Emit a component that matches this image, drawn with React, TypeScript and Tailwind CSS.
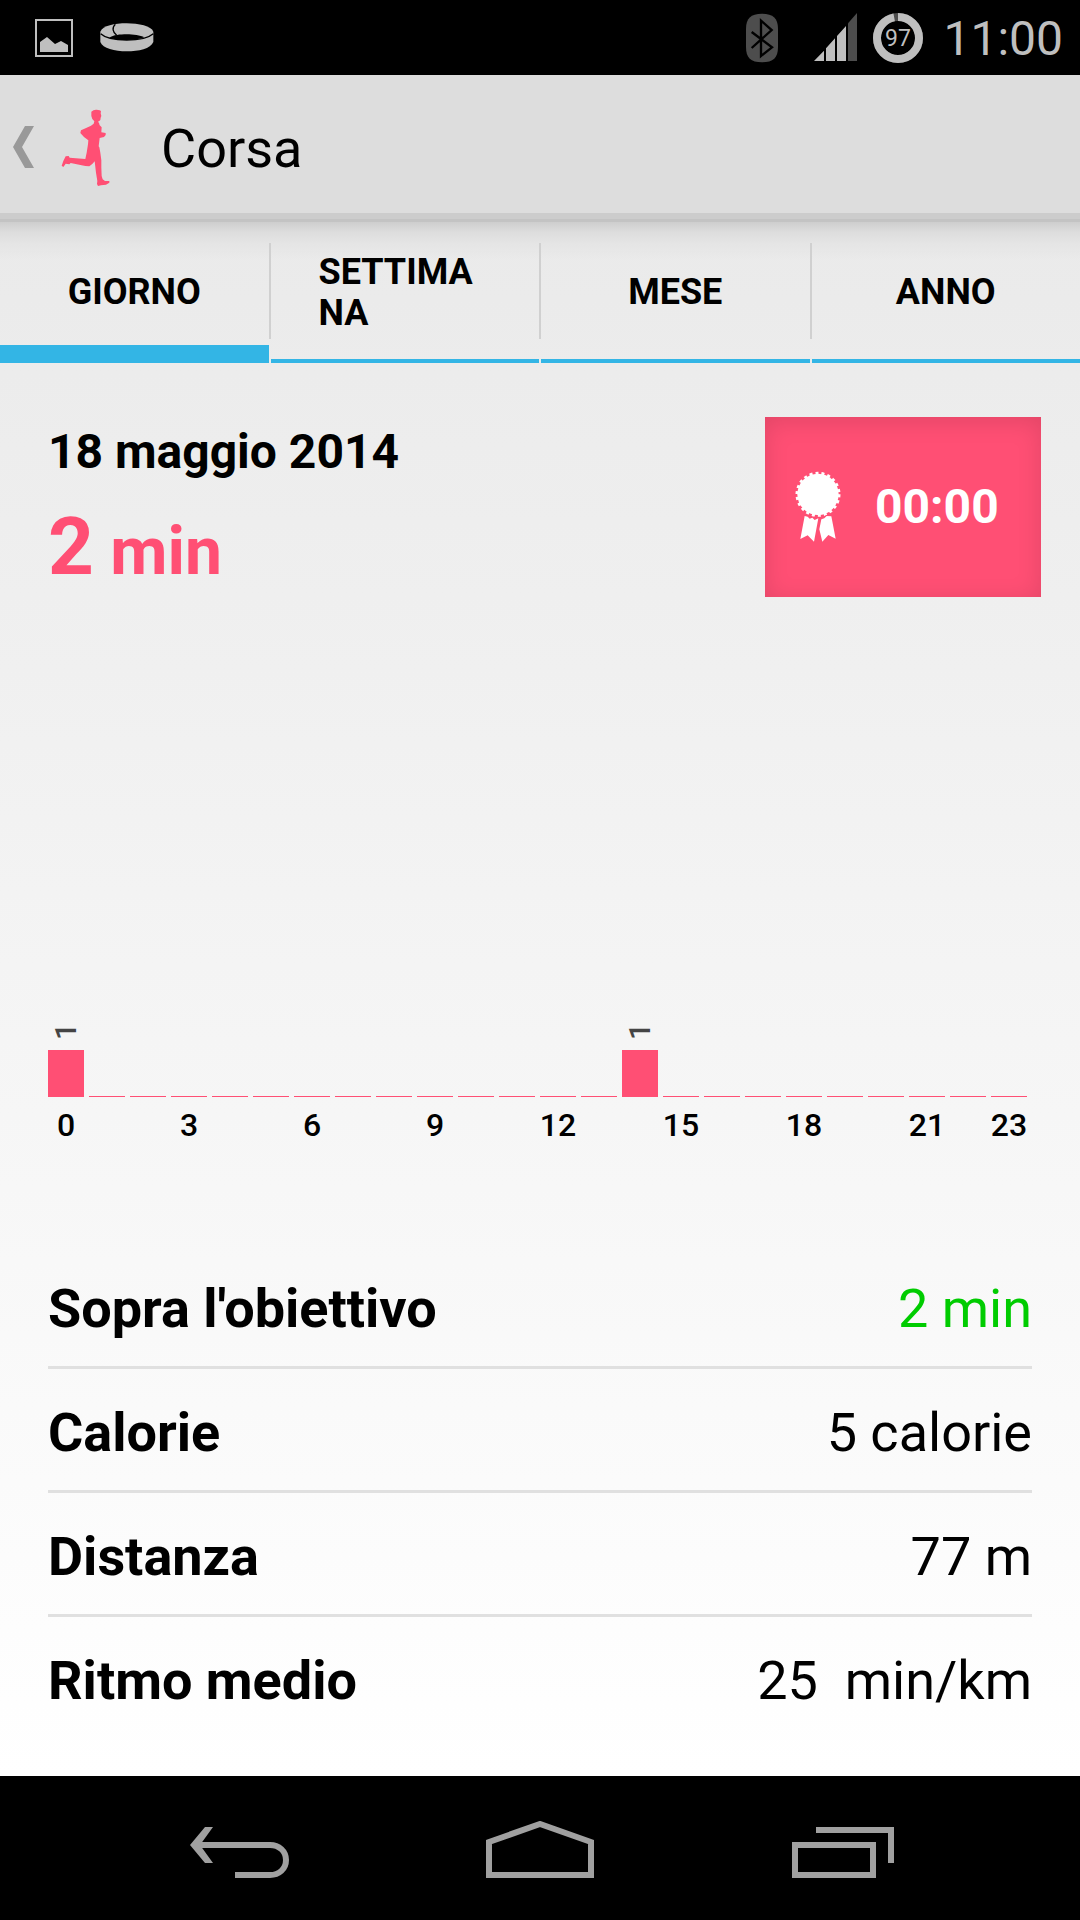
import { useState } from "react";
import clsx from "clsx";

const TABS = ["GIORNO", "SETTIMANA", "MESE", "ANNO"];

// minutes of running for each hour of the day
const HOURS = Array.from({ length: 24 }, (_, hour) => (hour === 0 || hour === 14 ? 1 : 0));
const HOUR_LABELS = [0, 3, 6, 9, 12, 15, 18, 21, 23];
const MINUTE_HEIGHT = 47;

const STATS = [
  { label: "Sopra l'obiettivo", value: "2 min", positive: true },
  { label: "Calorie", value: "5 calorie" },
  { label: "Distanza", value: "77 m" },
  { label: "Ritmo medio", value: "25\u00a0 min/km" },
];

function IconPicture() {
  return (
    <svg width="38" height="38" viewBox="0 0 38 38" fill="none">
      <rect x="1" y="1" width="36" height="36" stroke="#bfbfbf" strokeWidth="2" />
      <path d="M5 33V23l7-5 8 7 6-3 7 4v7Z" fill="#bfbfbf" />
    </svg>
  );
}

function IconBand() {
  return (
    <svg width="54" height="29" viewBox="0 0 162 87">
      <path d="M1 26C8 8 44 1 80 1s74 8 80 25v31c-8 20-44 28-80 28S8 76 1 57Z" fill="#bfbfbf" />
      <path d="M2 32c14 13 40 19 78 19s65-6 80-19" fill="none" stroke="#000" strokeWidth="4" />
      <path d="M28 44c12-8 32-10 52-10s41 3 53 9c-13 6-33 8-53 8s-39-2-52-7Z" fill="#000" />
      <path d="M46 4c-11 10-8 24 4 33" fill="none" stroke="#000" strokeWidth="4" />
    </svg>
  );
}

function IconBluetooth() {
  return (
    <svg width="32" height="50" viewBox="0 0 96 150">
      <path d="M48 2c34 0 48 14 48 46v54c0 32-14 46-48 46S0 134 0 102V48C0 16 14 2 48 2Z" fill="#4d4d4d" />
      <path d="M17 57l61 46-33 26V23l32 28-60 54" fill="none" stroke="#000" strokeWidth="7" />
    </svg>
  );
}

function IconSignal() {
  return (
    <svg width="43" height="49" viewBox="0 0 129 147">
      <path d="M0 144l30-31v31ZM36 144v-38l27-30v68ZM69 144V69l27-30v105Z" fill="#bfbfbf" />
      <path d="M102 144V31l27-31v144Z" fill="#4d4d4d" />
    </svg>
  );
}

function IconBattery({ level }: { level: number }) {
  return (
    <svg width="50" height="50" viewBox="0 0 50 50">
      <circle cx="25" cy="25" r="21" fill="none" stroke="#4d4d4d" strokeWidth="8" />
      <circle
        cx="25"
        cy="25"
        r="21"
        fill="none"
        stroke="#bfbfbf"
        strokeWidth="8"
        pathLength="100"
        strokeDasharray={`${level} 100`}
        transform="rotate(-90 25 25)"
      />
      <text x="25" y="33" textAnchor="middle" fontSize="23" fill="#bfbfbf">
        {level}
      </text>
    </svg>
  );
}

function IconChevron() {
  return (
    <svg width="21" height="42" viewBox="0 0 21 42" fill="#999">
      <path d="M12 0h9L9 21l12 21h-9L0 21Z" />
    </svg>
  );
}

function IconRunner() {
  return (
    <svg width="50" height="79" viewBox="180 321 150 237" fill="#ff4f74">
      <path d="M274 332Q281 325 290 326Q302 326 303 331L302 337L304 345L302 350L301 357Q298 361 294 362L297 366L299 373L305 379L304 394L317 396L317 402L312 408L299 411L296 436L298 439L301 455L304 478L304 500L305 525L308 535L315 540L328 540L328 545L318 551L303 553L294 555L291 549L292 540L288 515L284 481Q276 492 268 496L256 495L212 486L208 490L197 488L190 498L185 494L190 480L197 466L206 465L209 470L256 474L260 455L264 430L265 418L252 408L241 396L243 388L260 380L273 374L281 368L283 361Q275 354 274 345Z" />
    </svg>
  );
}

function IconRosette() {
  return (
    <svg width="46" height="72" viewBox="164 216 138 216" fill="#fff">
      <circle cx="233" cy="286" r="62" />
      <circle cx="233" cy="286" r="63" fill="none" stroke="#fff" strokeWidth="9" pathLength="44" strokeDasharray="1 1" />
      <path d="M193 351l9 2 6 6 8-3 7 7 11-5-13 70-19-19-22 11Z" />
      <path d="M243 361l9-3 7-7 14 1 13 67-22-11-18 20-9-37Z" />
    </svg>
  );
}

function StatusBar() {
  return (
    <div className="flex h-[75px] items-center justify-between bg-black pr-[17px] pl-[35px]">
      <div className="flex items-center gap-[27px]">
        <IconPicture />
        <IconBand />
      </div>
      <div className="flex items-center text-[#bfbfbf]">
        <IconBluetooth />
        <span className="ml-9">
          <IconSignal />
        </span>
        <span className="ml-4">
          <IconBattery level={97} />
        </span>
        <span className="ml-5 pt-[2px] text-[48px] leading-none">11:00</span>
      </div>
    </div>
  );
}

function Header() {
  return (
    <header className="flex h-[147px] items-center bg-[#ddd] pl-[13px] shadow-[inset_0_-3px_#c3c3c3,inset_0_-9px_#ccc]">
      <button type="button" aria-label="Indietro" className="flex items-center gap-[26px] pb-[3px]">
        <IconChevron />
        <IconRunner />
      </button>
      <h1 className="ml-[51px] text-[54px] leading-none">Corsa</h1>
    </header>
  );
}

function Tabs() {
  const [active, setActive] = useState(TABS[0]);

  return (
    <nav className="flex h-[141px] gap-[2px] bg-[linear-gradient(#cecece,#dddddd_10px,#e5e5e5_22px,#ebebeb00_38px)]">
      {TABS.map((tab, index) => (
        <button
          key={tab}
          type="button"
          onClick={() => setActive(tab)}
          className="relative flex flex-1 items-center justify-center px-12 text-left text-[36px] leading-[41px] font-bold"
        >
          <span className="break-all">{tab}</span>
          {index > 0 && <span className="absolute top-[21px] -left-[2px] h-24 w-[2px] bg-[#d0d0d0]" />}
          <span
            className={clsx(
              "absolute inset-x-0 bottom-0 bg-[#33b5e5]",
              active === tab ? "h-[18px]" : "h-1"
            )}
          />
        </button>
      ))}
    </nav>
  );
}

function Summary() {
  return (
    <section className="flex items-start justify-between pt-[54px] pr-[39px] pl-12 font-bold">
      <div>
        <h2 className="pt-[7px] text-[48px] leading-[56px]">18 maggio 2014</h2>
        <p className="mt-[19px] text-[66px] leading-[96px] text-[#ff4f74]">
          <span className="text-[80px]">2</span> min
        </p>
      </div>
      <div className="flex h-[180px] w-[276px] items-center bg-[#ff4f74] pl-[30px] text-white shadow-[inset_0_4px_24px_rgba(0,0,0,0.12)]">
        <IconRosette />
        <span className="ml-[34px] text-[48px] leading-none">00:00</span>
      </div>
    </section>
  );
}

function Chart() {
  return (
    <section className="mr-[5px] flex flex-1 flex-col justify-end">
      <div className="flex items-end gap-[5px]">
        {HOURS.map((minutes, hour) => (
          <div key={hour} className="flex w-0 flex-1 flex-col items-center">
            {minutes > 0 && (
              <span className="mb-[10px] rotate-180 text-[30px] leading-9 font-medium text-[#444] [writing-mode:vertical-rl]">
                {minutes}
              </span>
            )}
            <div
              className="w-full bg-[#ff4f74]"
              style={{ height: Math.max(1, minutes * MINUTE_HEIGHT) }}
            />
          </div>
        ))}
      </div>
      <div className="mt-2 flex h-10 gap-[5px] text-[32px] leading-10 font-medium">
        {HOURS.map((_, hour) => (
          <div key={hour} className="flex w-0 flex-1 justify-center">
            {HOUR_LABELS.includes(hour) && <span>{hour}</span>}
          </div>
        ))}
      </div>
    </section>
  );
}

function Stats() {
  return (
    <dl className="mt-[100px] pb-[38px] text-[54px] leading-[64px]">
      {STATS.map(({ label, value, positive }) => (
        <div
          key={label}
          className="flex justify-between border-b-[3px] border-[#e0e0e0] pt-8 pb-[25px] last:border-b-0"
        >
          <dt className="font-bold">{label}</dt>
          <dd className={clsx(positive && "text-[#00cc00]")}>{value}</dd>
        </div>
      ))}
    </dl>
  );
}

function NavigationBar() {
  return (
    <footer className="flex h-36 items-center bg-black px-[87px] pt-1.5">
      <button type="button" aria-label="Indietro" className="flex flex-1 justify-center">
        <svg width="108" height="60" viewBox="0 0 108 60">
          <path d="M6 24L21 6h8L16 24l13 18h-8Z" fill="#a0a0a0" />
          <path d="M12 24h74c9 0 16 6 16 15s-7 15-16 15H51" fill="none" stroke="#a0a0a0" strokeWidth="6" />
        </svg>
      </button>
      <button type="button" aria-label="Home" className="flex flex-1 justify-center">
        <svg width="108" height="60" viewBox="0 0 108 60" fill="none" stroke="#a0a0a0" strokeWidth="6">
          <path d="M3 21L54 3l51 18v33H3Z" />
        </svg>
      </button>
      <button type="button" aria-label="App recenti" className="flex flex-1 justify-center">
        <svg width="108" height="60" viewBox="0 0 108 60" fill="none" stroke="#a0a0a0" strokeWidth="6">
          <path d="M7 24h78v30H7ZM28 9h75v33" />
        </svg>
      </button>
    </footer>
  );
}

function App() {
  return (
    <div className="flex min-h-screen flex-col bg-white font-[Roboto,sans-serif] text-black">
      <StatusBar />
      <Header />
      <main className="flex flex-1 flex-col bg-linear-to-b from-[#eaeaea] to-white">
        <Tabs />
        <Summary />
        <div className="flex flex-1 flex-col px-12">
          <Chart />
          <Stats />
        </div>
      </main>
      <NavigationBar />
    </div>
  );
}

export default App;
